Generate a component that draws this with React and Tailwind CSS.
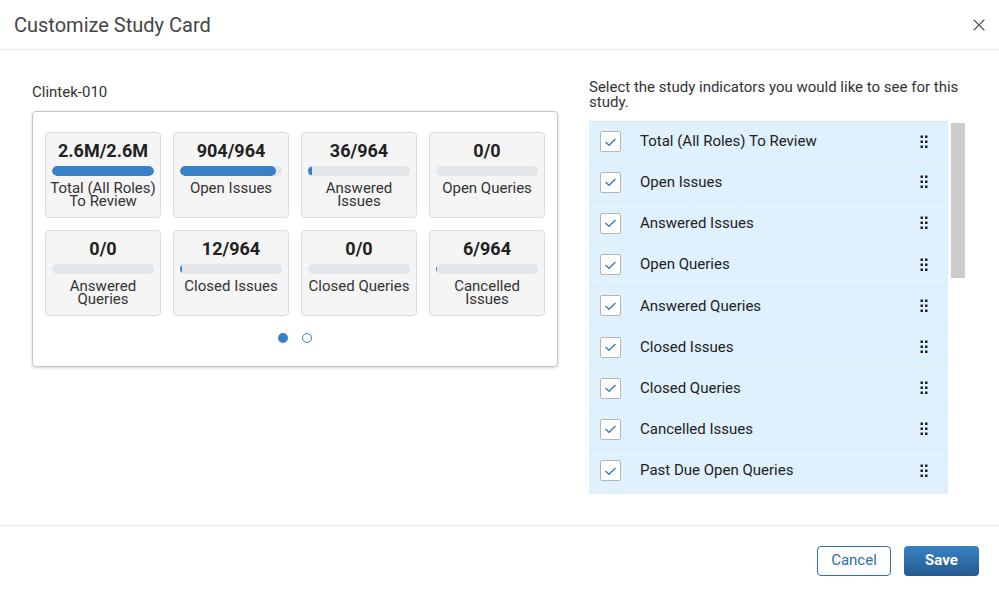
import { X } from 'lucide-react';

const tiles = [
    { value: '2.6M/2.6M', pct: 100, label: ['Total (All Roles)', 'To Review'] },
    { value: '904/964', pct: 94, label: ['Open Issues'] },
    { value: '36/964', pct: 4, label: ['Answered', 'Issues'] },
    { value: '0/0', pct: 0, label: ['Open Queries'] },
    { value: '0/0', pct: 0, label: ['Answered', 'Queries'] },
    { value: '12/964', pct: 1.5, label: ['Closed Issues'] },
    { value: '0/0', pct: 0, label: ['Closed Queries'] },
    { value: '6/964', pct: 1, label: ['Cancelled', 'Issues'] },
];

const indicators = [
    'Total (All Roles) To Review',
    'Open Issues',
    'Answered Issues',
    'Open Queries',
    'Answered Queries',
    'Closed Issues',
    'Closed Queries',
    'Cancelled Issues',
    'Past Due Open Queries',
    'Past Due Answered Queries',
    'Past Due Open Issues',
];

function Tile({ tile }) {
    return (
        <div className="h-[86px] rounded-[4px] border border-[#dcdcdc] bg-[#f5f5f5] px-[6px] pt-[7px] text-center">
            <div className="text-[18px] font-bold leading-[22px] text-[#222]">{tile.value}</div>
            <div className="mt-[4px] h-[10px] w-full overflow-hidden rounded-full bg-[#e4e7ea]">
                {tile.pct > 0 && (
                    <div className="h-full rounded-full bg-[#3a80c6]" style={{ width: `${tile.pct}%` }} />
                )}
            </div>
            <div className="-mx-[6px] mt-[6px] whitespace-nowrap text-[15px] leading-[13px] text-[#333]">
                {tile.label.map((l) => (
                    <div key={l}>{l}</div>
                ))}
            </div>
        </div>
    );
}

function DragHandle() {
    return (
        <svg width="8" height="14" viewBox="0 0 8 14" className="text-[#222]">
            {[0.5, 5.5, 10.5].map((y) => (
                <g key={y}>
                    <rect x="0.5" y={y} width="2.5" height="2.5" fill="currentColor" />
                    <rect x="5" y={y} width="2.5" height="2.5" fill="currentColor" />
                </g>
            ))}
        </svg>
    );
}

function Checkbox() {
    return (
        <div className="flex h-[21px] w-[21px] items-center justify-center rounded-[2px] border border-[#b5b5b5] bg-white">
            <svg width="13" height="10" viewBox="0 0 13 10" fill="none">
                <path d="M1.5 5 L5 8.3 L11.5 2" stroke="#3a80c6" strokeWidth="1.5" />
            </svg>
        </div>
    );
}

export default function App() {
    return (
        <div className="flex h-[595px] w-[999px] flex-col bg-white font-['Roboto',sans-serif] text-[#333]">
            <div className="flex h-[50px] shrink-0 items-center justify-between border-b border-[#e5e5e5] pl-[14px] pr-[10px]">
                <h2 className="text-[20px] text-[#454545]">Customize Study Card</h2>
                <X size={20} strokeWidth={1.4} className="text-[#555]" />
            </div>

            <div className="flex flex-1 gap-[31px] pl-[32px] pt-[33px]">
                <div className="w-[526px]">
                    <div className="text-[15px] leading-[18px] text-[#333]">Clintek-010</div>
                    <div className="mt-[10px] h-[256px] rounded-[4px] border border-[#c4c4c4] px-[12px] pt-[20px] shadow-[0_1px_3px_rgba(0,0,0,0.18)]">
                        <div className="grid grid-cols-4 gap-[12px]">
                            {tiles.map((t, i) => (
                                <Tile key={i} tile={t} />
                            ))}
                        </div>
                        <div className="mt-[17px] flex justify-center gap-[14px]">
                            <span className="h-[10px] w-[10px] rounded-full bg-[#3a80c6]" />
                            <span className="h-[10px] w-[10px] rounded-full border border-[#3a80c6]" />
                        </div>
                    </div>
                </div>

                <div className="w-[380px] -mt-[3px]">
                    <p className="text-[15px] leading-[15px] text-[#333]">
                        Select the study indicators you would like to see for this study.
                    </p>
                    <div className="mt-[11px] flex gap-[3px]">
                        <div className="h-[373px] w-[359px] overflow-hidden bg-[#dff1fc]">
                            {indicators.map((name) => (
                                <div
                                    key={name}
                                    className="flex h-[41.2px] items-center border-b border-[#e3e8ec] pl-[11px] pr-[20px] first:border-t"
                                >
                                    <Checkbox />
                                    <span className="ml-[19px] flex-1 text-[15px] text-[#222]">{name}</span>
                                    <DragHandle />
                                </div>
                            ))}
                        </div>
                        <div className="h-[373px] w-[14px] pt-[2px]">
                            <div className="h-[155px] w-full bg-[#cccccc]" />
                        </div>
                    </div>
                </div>
            </div>

            <div className="flex h-[70px] shrink-0 items-center justify-end gap-[13px] border-t border-[#e5e5e5] pr-[20px]">
                <button className="h-[30px] w-[74px] rounded-[4px] border border-[#2f6ea8] bg-white text-[15px] text-[#2f6ea8]">
                    Cancel
                </button>
                <button className="h-[30px] w-[75px] rounded-[4px] bg-gradient-to-b from-[#3a82c4] to-[#245a8e] text-[15px] font-bold text-white">
                    Save
                </button>
            </div>
        </div>
    );
}
